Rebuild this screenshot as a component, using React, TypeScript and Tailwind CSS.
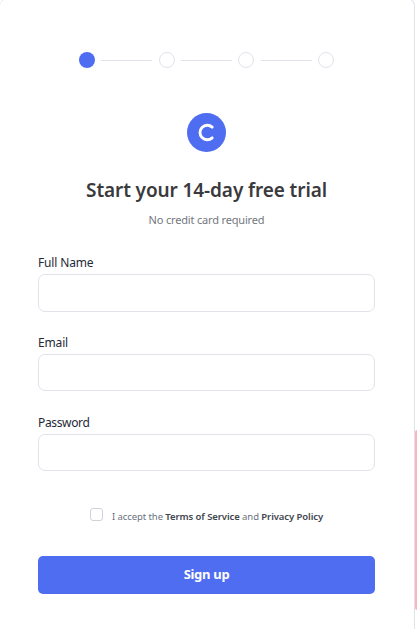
import { Fragment } from "react";

const fields = [
  { label: "Full Name", type: "text", box: "h-[38px] mb-[22px]", spacing: "tracking-[-0.15px]" },
  { label: "Email", type: "email", box: "h-[37px] mb-[23px]", spacing: "tracking-[-0.15px]" },
  { label: "Password", type: "password", box: "h-[37px]", spacing: "tracking-[-0.35px]" },
];

function Steps() {
  return (
    <div className="flex w-[255px] items-center justify-between">
      {[0, 1, 2, 3].map((step) => (
        <Fragment key={step}>
          {step > 0 && <span className="h-px w-[51px] bg-[#e1e3eb]" />}
          <span
            className={
              step === 0
                ? "size-4 rounded-full bg-[#4f6df0]"
                : "size-4 rounded-full border border-[#e1e3eb]"
            }
          />
        </Fragment>
      ))}
    </div>
  );
}

function Logo() {
  return (
    <svg className="mt-[45px] size-[39px]" viewBox="0 0 39 39" fill="none">
      <circle cx="19.5" cy="19.5" r="19.5" fill="#4f6df0" />
      <path
        d="M25.2 14.1A7.3 7.3 0 1 0 25.2 24.9"
        stroke="white"
        strokeWidth="2.9"
        strokeLinecap="round"
      />
    </svg>
  );
}

export default function App() {
  return (
    <div className="flex h-[629px] w-[417px] overflow-hidden bg-white font-['Noto_Sans','Open_Sans',sans-serif]">
      <main className="-mt-[2px] flex h-[640px] w-[415px] flex-col items-center rounded-t-lg border border-l-0 border-[#e1e3eb] pt-[53px] pr-px">
        <Steps />
        <Logo />
        <h1 className="mt-[26px] text-[19px] leading-6 font-semibold tracking-[-0.1px] whitespace-nowrap text-[#3a3a3c]">
          Start your 14-day free trial
        </h1>
        <p className="mt-[10px] text-[11px] leading-4 tracking-[-0.17px] whitespace-nowrap text-[#73777d]">
          No credit card required
        </p>
        <form className="mt-[26px] flex w-[337px] flex-col">
          {fields.map((field) => (
            <label key={field.label} className="flex flex-col">
              <span className={`h-5 pt-px text-[12px] leading-4 text-[#1f2937] ${field.spacing}`}>
                {field.label}
              </span>
              <input
                type={field.type}
                className={`w-full rounded-[7px] border border-[#e1e3eb] px-3 outline-none ${field.box}`}
              />
            </label>
          ))}
          <label className="mt-[37px] ml-[52px] flex h-[14px] items-start">
            <input
              type="checkbox"
              className="size-[13px] shrink-0 appearance-none rounded-[3px] border border-[#cfd2dc]"
            />
            <span className="ml-[9px] pt-[2px] text-[9.5px] leading-[14px] tracking-[-0.08px] whitespace-nowrap text-[#6b7280]">
              I accept the <span className="font-semibold text-[#41464f]">Terms of Service</span> and{" "}
              <span className="font-semibold text-[#41464f]">Privacy Policy</span>
            </span>
          </label>
          <button
            type="button"
            className="mt-[34px] h-[38px] rounded-[5px] bg-[#4f6df0] text-[13px] font-bold tracking-[-0.3px] text-white"
          >
            Sign up
          </button>
        </form>
      </main>
      <aside className="mt-[430px] h-[180px] w-[2px] rounded-l-[2px] bg-[#ffb3c1]" />
    </div>
  );
}
